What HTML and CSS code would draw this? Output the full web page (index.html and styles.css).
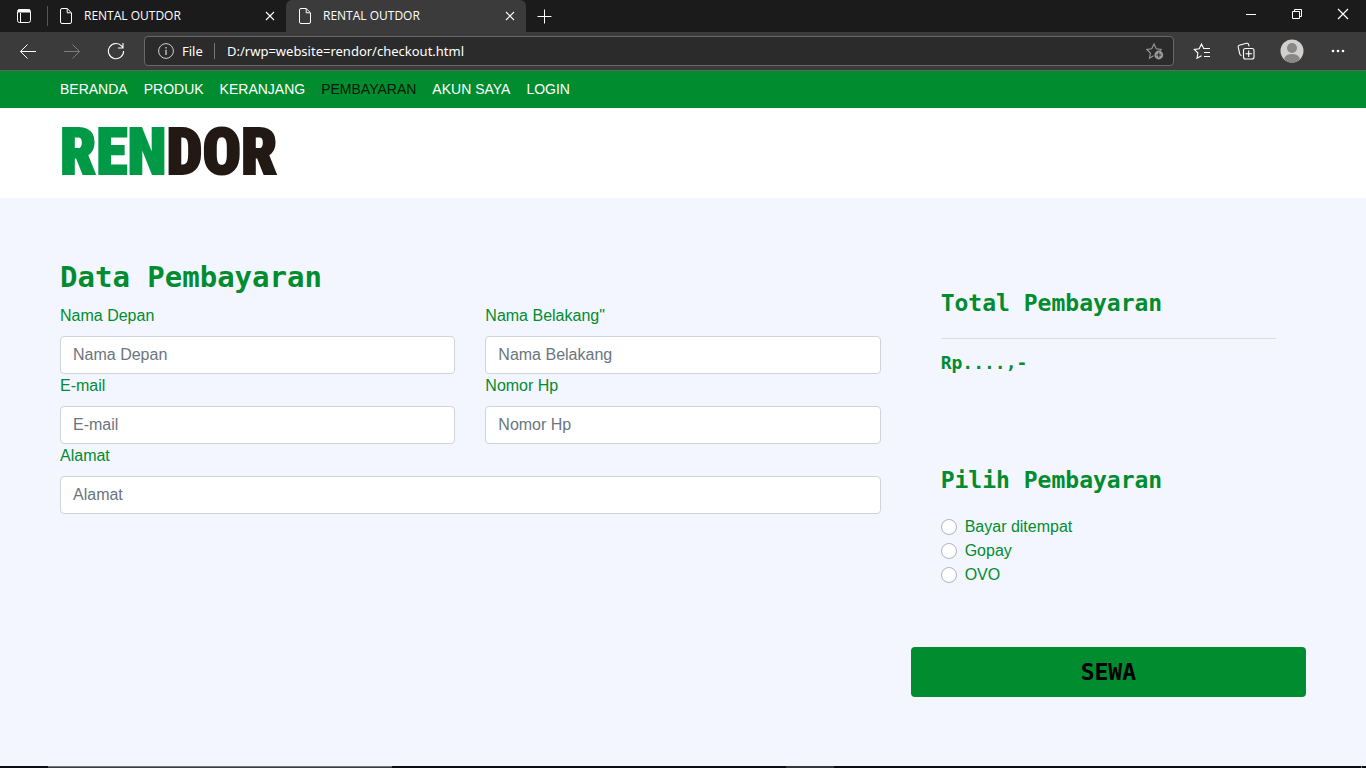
FILE: index.html
```html
<!DOCTYPE html>
<html lang="id">
<head>
<meta charset="utf-8">
<title>RENTAL OUTDOR</title>
<link rel="stylesheet" href="styles.css">
</head>
<body>
<div class="tabbar">
  <button class="tab-menu" aria-label="Tab actions">
    <svg width="16" height="16" viewBox="0 0 16 16" fill="none" stroke="currentColor"><rect x="1.500" y="1.500" width="13" height="13" rx="2"/><path d="M4.500 5v9"/><path d="M2 3h12" stroke-width="3"/></svg>
  </button>
  <div class="tab">
    <svg class="file-icon" width="12" height="16" viewBox="0 0 12 16" fill="none" stroke="currentColor"><path d="M.5 2Q.5.5 2 .5h5.200l4.300 4.300V14q0 1.500-1.500 1.500H2Q.5 15.500.5 14zM7.200.8v4h4"/></svg>
    <span class="tab-title">RENTAL OUTDOR</span>
    <button class="tab-close" aria-label="Close tab"><svg width="10" height="10" viewBox="0 0 10 10" fill="none" stroke="currentColor" stroke-width="1.100"><path d="M1 1l8 8M9 1L1 9"/></svg></button>
  </div>
  <div class="tab tab-active">
    <svg class="file-icon" width="12" height="16" viewBox="0 0 12 16" fill="none" stroke="currentColor"><path d="M.5 2Q.5.5 2 .5h5.200l4.300 4.300V14q0 1.500-1.500 1.500H2Q.5 15.500.5 14zM7.200.8v4h4"/></svg>
    <span class="tab-title">RENTAL OUTDOR</span>
    <button class="tab-close" aria-label="Close tab"><svg width="10" height="10" viewBox="0 0 10 10" fill="none" stroke="currentColor" stroke-width="1.100"><path d="M1 1l8 8M9 1L1 9"/></svg></button>
  </div>
  <button class="new-tab" aria-label="New tab"><svg width="15" height="15" viewBox="0 0 15 15" fill="none" stroke="currentColor"><path d="M7.500.5v14M.5 7.500h14"/></svg></button>
  <div class="window-controls">
    <button aria-label="Minimize"><svg width="10" height="10" viewBox="0 0 10 10" stroke="currentColor"><path d="M0 5.500h10"/></svg></button>
    <button aria-label="Restore"><svg width="10" height="10" viewBox="0 0 10 10" fill="none" stroke="currentColor"><path d="M.5 2.500h7v7h-7zM2.500 2.500v-2h7v7h-2"/></svg></button>
    <button aria-label="Close"><svg width="12" height="12" viewBox="0 0 12 12" fill="none" stroke="currentColor" stroke-width="1.200"><path d="M1 1l10 10M11 1L1 11"/></svg></button>
  </div>
</div>

<div class="toolbar">
  <button class="tool" aria-label="Back"><svg width="18" height="16" viewBox="0 0 18 16" fill="none" stroke="currentColor"><path d="M17 8.500H1.500M8.500 1.500l-7 7 7 7"/></svg></button>
  <button class="tool tool-off" aria-label="Forward"><svg width="18" height="16" viewBox="0 0 18 16" fill="none" stroke="currentColor"><path d="M1 8.500h15.500M9.500 1.500l7 7-7 7"/></svg></button>
  <button class="tool" aria-label="Refresh"><svg width="18" height="18" viewBox="0 0 18 18" fill="none" stroke="currentColor" stroke-width="1.100"><path d="M16.600 9A7.600 7.600 0 1 1 14.800 4.200l1 1.300M16 1v5h-5"/></svg></button>
  <div class="address">
    <svg width="16" height="16" viewBox="0 0 16 16" fill="none" stroke="#d0d0d0"><circle cx="8" cy="8" r="7.400"/><path d="M8 6.800V12M8 4v1.500" stroke-width="1.300"/></svg>
    <label class="scheme" for="url">File</label>
    <input class="url" id="url" type="text" value="D:/rwp=website=rendor/checkout.html">
    <button class="add-favorite" aria-label="Add to favorites"><svg width="18" height="18" viewBox="0 0 18 18" fill="none" stroke="currentColor" stroke-width="1.100"><path d="M7.500 13.800L3.500 16.200l.9-5.200L.8 7.400l4.900-.7L8 2l2.300 4.700 4.900.7-1.200 1.200"/><circle cx="12.800" cy="13" r="4.400" fill="currentColor" stroke="none"/><path d="M12.800 10.600v4.800M10.400 13h4.800" stroke="#2b2b2b"/></svg></button>
  </div>
  <button class="tool" aria-label="Favorites"><svg width="18" height="18" viewBox="0 0 18 18" fill="none" stroke="currentColor" stroke-width="1.100"><path d="M8.500 13.700L4 16.200l.9-5.200L1.300 7.400l4.900-.7L8.500 2l2.200 4.500H17M11 10.500h6M11 14.500h6"/></svg></button>
  <button class="tool" aria-label="Collections"><svg width="18" height="18" viewBox="0 0 18 18" fill="none" stroke="currentColor" stroke-width="1.100"><rect x="6.500" y="6.500" width="10.500" height="10.500" rx="2"/><path d="M11.700 8.500v6.500M8.500 11.700h6.500M4.500 13.400q-1.300-.1-1.700-1.300L1.200 5.200Q.9 3.800 2.200 3.300l7.300-2q1.500-.3 2 1l.6 2"/></svg></button>
  <button class="tool tool-profile" aria-label="Profile"><svg width="24" height="24" viewBox="0 0 24 24"><circle cx="12" cy="12" r="11.500" fill="#d2d0ce"/><circle cx="12" cy="9" r="5" fill="#8a8886"/><path d="M4 20q1.500-5 8-5t8 5q-3 3.500-8 3.500T4 20z" fill="#8a8886"/></svg></button>
  <button class="tool" aria-label="Settings and more"><svg width="14" height="4" viewBox="0 0 14 4" fill="currentColor"><circle cx="2" cy="2" r="1.300"/><circle cx="7" cy="2" r="1.300"/><circle cx="12" cy="2" r="1.300"/></svg></button>
</div>

<nav class="site-nav">
  <a href="#beranda">BERANDA</a>
  <a href="#produk">PRODUK</a>
  <a href="#keranjang">KERANJANG</a>
  <a class="current" href="#pembayaran">PEMBAYARAN</a>
  <a href="#akun">AKUN SAYA</a>
  <a href="#login">LOGIN</a>
</nav>

<header class="brand">
  <a class="logo" href="#beranda"><span class="logo-green">REN</span>DOR</a>
</header>

<main class="checkout">
  <form class="checkout-grid">
    <section class="billing">
      <h1>Data Pembayaran</h1>
      <div class="fields">
        <div class="field"><label for="first">Nama Depan</label><input id="first" type="text" placeholder="Nama Depan"></div>
        <div class="field"><label for="last">Nama Belakang"</label><input id="last" type="text" placeholder="Nama Belakang"></div>
        <div class="field"><label for="email">E-mail</label><input id="email" type="text" placeholder="E-mail"></div>
        <div class="field"><label for="phone">Nomor Hp</label><input id="phone" type="text" placeholder="Nomor Hp"></div>
        <div class="field field-wide"><label for="address">Alamat</label><input id="address" type="text" placeholder="Alamat"></div>
      </div>
    </section>
    <section class="summary">
      <div class="panel total">
        <h2>Total Pembayaran</h2>
        <p class="amount">Rp....,-</p>
      </div>
      <div class="panel">
        <h2>Pilih Pembayaran</h2>
        <div class="methods">
          <label class="method"><input type="radio" name="method">Bayar ditempat</label>
          <label class="method"><input type="radio" name="method">Gopay</label>
          <label class="method"><input type="radio" name="method">OVO</label>
        </div>
      </div>
      <button class="rent" type="button">SEWA</button>
    </section>
  </form>
</main>

<div class="taskbar">
  <span class="task-search"></span>
  <span class="task-app"></span>
  <span class="task-edge"></span>
</div>
</body>
</html>
```

FILE: styles.css
```css
* {
  box-sizing: border-box;
}

body {
  margin: 0;
  min-height: 100vh;
  display: flex;
  flex-direction: column;
  background: #f3f6ff;
  color: #018c2f;
  font: 16px/24px "Liberation Sans", Arial, sans-serif;
}

button {
  padding: 0;
  border: 0;
  background: none;
  color: inherit;
  font: inherit;
}

svg {
  display: block;
  flex: none;
}

/* Browser frame */

.tabbar,
.toolbar {
  display: flex;
  color: #fff;
  font-family: "Open Sans", "Noto Sans", sans-serif;
}

.tabbar {
  height: 32px;
  background: #1b1b1b;
  font-size: 12px;
}

.tab-menu {
  width: 48px;
  display: grid;
  place-items: center;
  background: linear-gradient(#555, #555) right center / 1px 20px no-repeat;
}

.tab {
  width: 238px;
  display: flex;
  align-items: center;
  padding: 0 10px 0 12px;
}

.tab-active {
  width: 240px;
  padding-left: 13px;
  border-radius: 6px 6px 0 0;
  background: #3b3b3b;
}

.tab-title {
  margin-left: 12px;
  flex: 1;
}

.tab-close {
  width: 12px;
  display: grid;
  place-items: center;
}

.new-tab {
  width: 36px;
  display: grid;
  place-items: center;
}

.window-controls {
  margin-left: auto;
  display: flex;
  height: 28px;
}

.window-controls button {
  width: 46px;
  display: grid;
  place-items: center;
}

.toolbar {
  height: 39px;
  padding: 0 6px;
  align-items: center;
  background: #3b3b3b;
  border-bottom: 1px solid #636363;
}

.tool {
  width: 44px;
  height: 30px;
  display: grid;
  place-items: center;
}

.tool-off {
  color: #7d7d7d;
}

.tool-profile {
  width: 48px;
}

.address {
  flex: 1;
  height: 30px;
  margin: 0 6px;
  padding-left: 13px;
  display: flex;
  align-items: center;
  border: 1px solid #686868;
  border-radius: 4px;
  background: #2b2b2b;
  font-family: "Noto Sans", "Open Sans", sans-serif;
  font-size: 13px;
}

.scheme {
  width: 33px;
  margin: 0 12px 0 8px;
  line-height: 16px;
  border-right: 1px solid #777;
}

.url {
  flex: 1;
  padding: 0;
  border: 0;
  outline: 0;
  background: none;
  color: #fff;
  font: inherit;
}

.add-favorite {
  width: 36px;
  display: grid;
  place-items: center;
  color: #9a9a9a;
}

/* Site header */

.site-nav {
  display: flex;
  gap: 16px;
  padding: 8px 60px;
  background: #018c2f;
  font-size: 14px;
  line-height: 21px;
}

.site-nav a {
  color: #fff;
  text-decoration: none;
}

.site-nav .current {
  color: #001a08;
}

.brand {
  padding: 15px 60px;
  background: #fff;
}

.logo {
  display: block;
  color: #231914;
  font: 900 64px/60px "Liberation Sans Narrow", "Roboto Condensed", "DejaVu Sans Condensed", sans-serif;
  text-decoration: none;
  -webkit-text-stroke: 2px currentColor;
}

.logo-green {
  color: #009a46;
}

/* Checkout */

.checkout {
  flex: 1;
  padding: 60px;
}

.checkout-grid {
  display: grid;
  grid-template-columns: repeat(3, 1fr);
  gap: 30px;
}

.billing {
  grid-column: span 2;
}

h1,
h2,
.amount,
.rent {
  margin: 0;
  font-family: "DejaVu Sans Mono", Consolas, monospace;
  font-weight: bold;
}

h1 {
  margin-bottom: 8px;
  font-size: 29px;
  line-height: 38px;
}

h2 {
  font-size: 23px;
  line-height: 30px;
}

.fields {
  display: grid;
  grid-template-columns: 1fr 1fr;
  column-gap: 30px;
}

.field {
  display: flex;
  flex-direction: column;
  gap: 8px;
}

.field-wide {
  grid-column: span 2;
}

.field input {
  height: 38px;
  padding: 6px 12px;
  border: 1px solid #ced4da;
  border-radius: 4px;
  background: #fff;
  color: #495057;
  font: inherit;
}

.field input::placeholder {
  color: #6c757d;
  opacity: 1;
}

.summary {
  display: flex;
  flex-direction: column;
  gap: 60px;
}

.panel {
  padding: 0 30px;
}

.total {
  padding: 30px 30px;
}

.total h2 {
  padding-bottom: 20px;
  border-bottom: 1px solid #dcdde0;
}

.amount {
  margin-top: 12px;
  font-size: 18px;
  line-height: 24px;
}

.methods {
  margin-top: 20px;
}

.method {
  display: flex;
  align-items: center;
  gap: 8px;
}

.method input {
  appearance: none;
  width: 16px;
  height: 16px;
  margin: 0;
  border: 1px solid #adb5bd;
  border-radius: 50%;
  background: #fff;
}

.method input:checked {
  border: 5px solid #018c2f;
}

.rent {
  height: 50px;
  border-radius: 4px;
  background: #018c2f;
  color: #000;
  font-size: 23px;
}

/* Top edge of the desktop taskbar */

.taskbar {
  height: 2px;
  display: flex;
  background: #0c0c14;
}

.task-search {
  width: 344px;
  margin-left: 48px;
  background: #3c3c40;
  border-top: 1px solid #77777a;
}

.task-app {
  width: 48px;
  margin-left: 394px;
  background: #35353b;
}

.task-edge {
  width: 1px;
  margin: 0 4px 0 auto;
  background: #77777a;
}
```
